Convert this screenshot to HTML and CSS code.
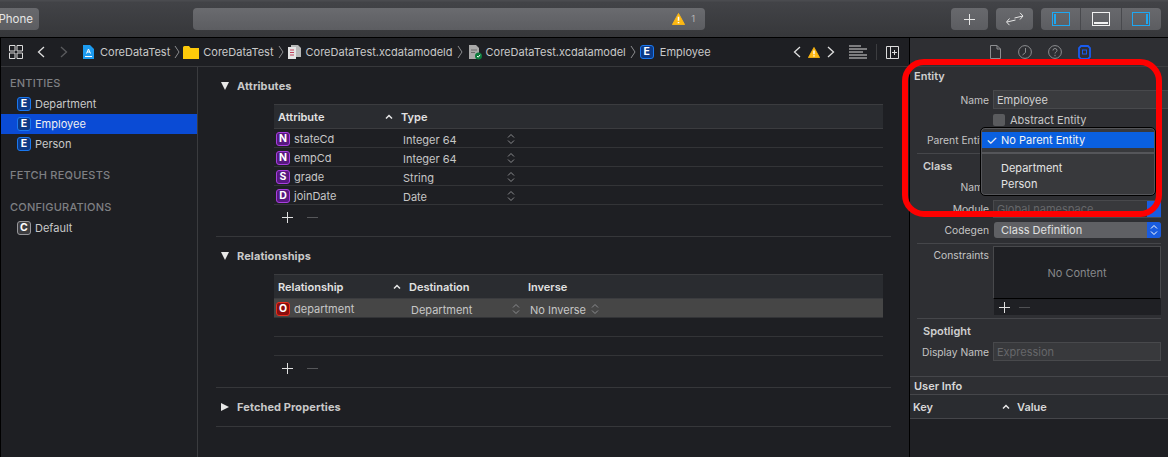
FILE: index.html
```html
<!DOCTYPE html>
<html lang="en">
<head>
<meta charset="utf-8">
<title>CoreDataTest</title>
<link rel="stylesheet" href="styles.css">
</head>
<body>
<svg class="defs" width="0" height="0" aria-hidden="true">
  <symbol id="stepper" viewBox="0 0 8 12"><path d="M1 4.500 4 1.500 7 4.500M1 7.500 4 10.500 7 7.500" fill="none" stroke="currentColor" stroke-width="1"/></symbol>
  <symbol id="caret" viewBox="0 0 8 6"><path d="M1 4.500 4 1.500 7 4.500" fill="none" stroke="currentColor" stroke-width="1.500"/></symbol>
  <symbol id="plus" viewBox="0 0 13 13"><path d="M6.500 1v11M1 6.500h11" stroke="currentColor" stroke-width="1" fill="none"/></symbol>
  <symbol id="minus" viewBox="0 0 13 13"><path d="M1 6.500h11" stroke="currentColor" stroke-width="1" fill="none"/></symbol>
  <symbol id="chev" viewBox="0 0 6 14"><path d="M1 1 5 7 1 13" stroke="currentColor" stroke-width="1" fill="none"/></symbol>
  <symbol id="warn" viewBox="0 0 14 13"><path d="M7 .5 13.600 12.500H.4Z" fill="#fdb813" stroke="#fdb813" stroke-linejoin="round"/><path d="M7 4v4.500M7 9.800v1.400" stroke="#fff" stroke-width="1.700"/></symbol>
</svg>
<div class="app">
  <header class="toolbar">
    <div class="tb-btn scheme">Phone</div>
    <div class="activity"><svg class="warn-icon"><use href="#warn"/></svg><span class="activity-count">1</span></div>
    <div class="tb-right">
      <div class="tb-btn icon-btn"><svg width="13" height="13"><use href="#plus"/></svg></div>
      <div class="tb-btn icon-btn">
        <svg width="20" height="14" viewBox="0 0 20 14"><path d="M2 10 10.500 8M4.500 6.500 1.500 10l3 3.200M9.500 6 18 4M15 .8l3 3.200-3 3.500" fill="none" stroke="currentColor" stroke-width="1"/></svg>
      </div>
      <div class="segment">
        <div class="seg"><svg width="18" height="14" viewBox="0 0 18 14"><rect x=".5" y=".5" width="17" height="13" fill="none" stroke="#1ea7f2"/><rect x="2" y="2" width="2" height="10" fill="#1ea7f2"/></svg></div>
        <div class="seg"><svg width="18" height="14" viewBox="0 0 18 14"><rect x=".5" y=".5" width="17" height="13" fill="none" stroke="#f2f2f2"/><rect x="2" y="10" width="14" height="2" fill="#f2f2f2"/></svg></div>
        <div class="seg"><svg width="18" height="14" viewBox="0 0 18 14"><rect x=".5" y=".5" width="17" height="13" fill="none" stroke="#1ea7f2"/><rect x="14" y="2" width="2" height="10" fill="#1ea7f2"/></svg></div>
      </div>
    </div>
  </header>

  <div class="workspace">
    <div class="editor">
      <nav class="pathbar">
        <svg class="p-grid" width="14" height="14" viewBox="0 0 14 14"><path d="M.5.500h5.500v5.500H.5zM8 .5h5.500v5.500H8zM.5 8h5.500v5.500H.5zM8 8h5.500v5.500H8z" fill="none" stroke="#dcdcdc"/></svg>
        <svg class="p-back" width="8" height="12" viewBox="0 0 8 12"><path d="M7 1 1.500 6 7 11" fill="none" stroke="#e0e0e0" stroke-width="1.300"/></svg>
        <svg class="p-fwd" width="8" height="12" viewBox="0 0 8 12"><path d="M1 1 6.500 6 1 11" fill="none" stroke="#5a5b5e" stroke-width="1.300"/></svg>
        <svg class="p-file" width="11" height="14" viewBox="0 0 11 14"><path d="M0 0h7l4 4v10H0z" fill="#1c9bf0"/><path d="M3.500 8.500 5.500 4 7.500 8.500M4 7h3M2 11.500h7" stroke="#fff" fill="none"/></svg>
        <span class="crumb c1">CoreDataTest</span>
        <svg class="sep" width="6" height="14"><use href="#chev"/></svg>
        <svg class="p-folder" width="16" height="13" viewBox="0 0 16 13"><path d="M0 1.500Q0 0 1.500 0H6l1.500 2H16v11H0z" fill="#fdc90a"/></svg>
        <span class="crumb c2">CoreDataTest</span>
        <svg class="sep" width="6" height="14"><use href="#chev"/></svg>
        <svg class="p-doc" width="13" height="14" viewBox="0 0 13 14"><path d="M3 0h7l3 3v9H3z" fill="#b9b9b9"/><path d="M0 2h8v12H0z" fill="#e4e4e4"/><path d="M2 5h4M2 7.500h4M2 10h4" stroke="#c0405a"/></svg>
        <span class="crumb c3">CoreDataTest.xcdatamodeld</span>
        <svg class="sep" width="6" height="14"><use href="#chev"/></svg>
        <svg class="p-doc2" width="13" height="15" viewBox="0 0 13 15"><path d="M0 0h7l3 3v11H0z" fill="#a9a9a9"/><path d="M2 5h6M2 7.500h4" stroke="#6a6a6a"/><circle cx="9.500" cy="11" r="3.500" fill="#0c7a3c"/><path d="M8 11l1.200 1.200L11.200 9.800" stroke="#fff" fill="none"/></svg>
        <span class="crumb c4">CoreDataTest.xcdatamodel</span>
        <svg class="sep" width="6" height="14"><use href="#chev"/></svg>
        <span class="badge blue">E</span>
        <span class="crumb c5">Employee</span>
        <div class="path-right">
          <svg width="8" height="12" viewBox="0 0 8 12"><path d="M7 1 1.500 6 7 11" fill="none" stroke="#e0e0e0" stroke-width="1.300"/></svg>
          <svg class="warn-small"><use href="#warn"/></svg>
          <svg width="8" height="12" viewBox="0 0 8 12"><path d="M1 1 6.500 6 1 11" fill="none" stroke="#e0e0e0" stroke-width="1.300"/></svg>
          <svg class="p-lines" width="18" height="14" viewBox="0 0 18 14"><path d="M0 1h12M0 4h18M0 7h14M0 10h18M0 13h18" stroke="#dcdcdc"/></svg>
          <span class="p-divider"></span>
          <svg width="13" height="13" viewBox="0 0 13 13"><path d="M.5.500h12v12H.5zM4.500.5v12M6 6.500h5M8.500 4v5" fill="none" stroke="#dcdcdc"/></svg>
        </div>
      </nav>
      <div class="panes">
        <aside class="sidebar">
          <div class="side-head first">ENTITIES</div>
          <div class="side-row"><span class="badge blue">E</span>Department</div>
          <div class="side-row selected"><span class="badge blue">E</span>Employee</div>
          <div class="side-row"><span class="badge blue">E</span>Person</div>
          <div class="side-head fetch">FETCH REQUESTS</div>
          <div class="side-head conf">CONFIGURATIONS</div>
          <div class="side-row"><span class="badge grey">C</span>Default</div>
        </aside>
        <main class="content">
          <section class="section attrs">
            <h2 class="sec-title"><span class="tri down"></span>Attributes</h2>
            <div class="table">
              <div class="t-head">
                <span class="th col-attr">Attribute<svg class="caret"><use href="#caret"/></svg></span>
                <span class="th">Type</span>
              </div>
              <div class="t-row"><span class="cell col-attr"><span class="badge purple">N</span>stateCd</span><span class="cell-val col-type">Integer 64<svg class="stepper"><use href="#stepper"/></svg></span></div>
              <div class="t-row"><span class="cell col-attr"><span class="badge purple">N</span>empCd</span><span class="cell-val col-type">Integer 64<svg class="stepper"><use href="#stepper"/></svg></span></div>
              <div class="t-row"><span class="cell col-attr"><span class="badge purple">S</span>grade</span><span class="cell-val col-type">String<svg class="stepper"><use href="#stepper"/></svg></span></div>
              <div class="t-row"><span class="cell col-attr"><span class="badge purple">D</span>joinDate</span><span class="cell-val col-type">Date<svg class="stepper"><use href="#stepper"/></svg></span></div>
              <div class="t-foot"><svg class="f-plus" width="13" height="13"><use href="#plus"/></svg><svg class="f-minus" width="13" height="13"><use href="#minus"/></svg></div>
            </div>
          </section>
          <section class="section rels">
            <h2 class="sec-title"><span class="tri down"></span>Relationships</h2>
            <div class="table">
              <div class="t-head">
                <span class="th col-rel">Relationship<svg class="caret"><use href="#caret"/></svg></span>
                <span class="th col-dest">Destination</span>
                <span class="th">Inverse</span>
              </div>
              <div class="t-row selected-row"><span class="cell col-rel"><span class="badge red">O</span>department</span><span class="cell-val col-destv">Department<svg class="stepper"><use href="#stepper"/></svg></span><span class="cell-val col-inv">No Inverse<svg class="stepper near"><use href="#stepper"/></svg></span></div>
              <div class="t-row"></div>
              <div class="t-row"></div>
              <div class="t-foot"><svg class="f-plus" width="13" height="13"><use href="#plus"/></svg><svg class="f-minus" width="13" height="13"><use href="#minus"/></svg></div>
            </div>
          </section>
          <section class="section fetched">
            <h2 class="sec-title"><span class="tri right"></span>Fetched Properties</h2>
          </section>
        </main>
      </div>
    </div>

    <aside class="inspector">
      <div class="insp-tabs">
        <svg class="tab-file" width="11" height="14" viewBox="0 0 11 14"><path d="M.5.500h6.500l3.500 3.500v9.500H.5zM7 .5v3.500h3.500" fill="none" stroke="#8d8e91"/></svg>
        <svg width="14" height="14" viewBox="0 0 14 14"><circle cx="7" cy="7" r="6.400" fill="none" stroke="#8d8e91"/><path d="M7.500 3v4.500L4.500 10" fill="none" stroke="#8d8e91"/></svg>
        <svg width="14" height="14" viewBox="0 0 14 14"><circle cx="7" cy="7" r="6.400" fill="none" stroke="#8d8e91"/><path d="M5 5.500Q5 3.500 7 3.500T9 5.500C9 7 7 7 7 8.500M7 9.800v1.400" fill="none" stroke="#8d8e91"/></svg>
        <svg width="13" height="15" viewBox="0 0 13 15"><path d="M3 1h7l2 2v9l-2 2H3l-2-2V3z" fill="none" stroke="#1a5cf0" stroke-width="1.800"/><rect x="4.500" y="5" width="4" height="4" fill="none" stroke="#1a5cf0"/></svg>
      </div>
      <div class="i-head entity">Entity</div>
      <div class="i-row name-row"><span class="i-label">Name</span><span class="i-field open">Employee</span></div>
      <div class="i-row abstract-row"><span class="i-label"></span><span class="check"></span><span class="check-label">Abstract Entity</span></div>
      <div class="i-row parent-row"><span class="i-label">Parent Entity</span></div>
      <div class="i-div"></div>
      <div class="i-head class-head">Class</div>
      <div class="i-row class-name"><span class="i-label">Name</span></div>
      <div class="i-row module-row"><span class="i-label">Module</span><span class="i-field dim combo">Global namespace<span class="combo-end"></span></span></div>
      <div class="i-row codegen-row"><span class="i-label">Codegen</span><span class="popup-btn">Class Definition<span class="popup-end"><svg class="stepper white"><use href="#stepper"/></svg></span></span></div>
      <div class="i-div codegen-div"></div>
      <div class="i-row constraints-row"><span class="i-label top">Constraints</span><div class="con-box">No Content</div></div>
      <div class="con-foot"><svg width="13" height="13"><use href="#plus"/></svg><svg class="dim-icon" width="13" height="13"><use href="#minus"/></svg></div>
      <div class="i-div spot-div"></div>
      <div class="i-head class-head">Spotlight</div>
      <div class="i-row display-row"><span class="i-label">Display Name</span><span class="i-field dim boxed">Expression</span></div>
      <div class="i-band userinfo">User Info</div>
      <div class="i-band keyhead"><span class="key">Key<svg class="caret"><use href="#caret"/></svg></span><span class="value">Value</span></div>
      <div class="i-rest"></div>

      <div class="menu">
        <div class="menu-item active"><span class="tick">✓</span>No Parent Entity</div>
        <div class="menu-sep"></div>
        <div class="menu-item">Department</div>
        <div class="menu-item">Person</div>
      </div>
      <div class="annotation"></div>
    </aside>
  </div>
</div>
</body>
</html>
```
FILE: styles.css
```css
* { box-sizing: border-box; }
html, body { margin: 0; padding: 0; }
body {
  width: 1168px;
  height: 457px;
  overflow: hidden;
  background: #1e1f23;
  color: #cfcfcf;
  font-family: Inter, "Liberation Sans", sans-serif;
  font-size: 11px;
  line-height: 14px;
}
.defs { position: absolute; }
svg { display: block; flex: none; }
.app { display: flex; flex-direction: column; height: 457px; }

/* toolbar */
.toolbar {
  height: 38px;
  flex: none;
  display: flex;
  align-items: flex-start;
  padding-top: 8px;
  background: linear-gradient(#4a4b4f 0, #4a4b4f 1px, #424347 2px, #36373a 100%);
  border-bottom: 1px solid #000;
}
.tb-btn {
  height: 22px;
  background: linear-gradient(#68696d, #5c5d61);
  border-radius: 4px;
  color: #e6e6e6;
  display: flex;
  align-items: center;
  justify-content: center;
}
.scheme { width: 39px; font-size: 11.500px; border-radius: 0 4px 4px 0; justify-content: flex-end; padding-right: 6px; }
.activity {
  width: 512px;
  height: 22px;
  margin-left: 154px;
  background: linear-gradient(#6a6b6f, #5c5d61);
  border-radius: 4px;
  display: flex;
  align-items: center;
  justify-content: flex-end;
  padding-right: 10px;
}
.warn-icon { width: 13px; height: 12px; }
.activity-count { margin-left: 6px; font-size: 9.500px; color: #b4b4b4; }
.tb-right { margin-left: 246px; display: flex; gap: 8px; }
.icon-btn { width: 37px; }
.segment {
  width: 120px;
  height: 22px;
  display: flex;
  border-radius: 4px;
  background: linear-gradient(#68696d, #5c5d61);
  overflow: hidden;
}
.seg { flex: 1; display: flex; align-items: center; justify-content: center; border-left: 1px solid #48494d; }
.seg:first-child { border-left: 0; }

/* layout */
.workspace { flex: 1; min-height: 0; display: flex; }
.editor { flex: none; display: flex; flex-direction: column; border-left: 1px solid #000; border-right: 1px solid #000; width: 910px; }
.pathbar {
  height: 29px;
  flex: none;
  display: flex;
  align-items: center;
  color: #c9c9c9;
  background: #1e1f23;
  border-bottom: 1px solid #37383b;
}
.p-grid { margin-left: 8px; }
.p-back { margin-left: 14px; }
.p-fwd { margin-left: 15px; }
.p-file { margin-left: 15px; }
.crumb { white-space: nowrap; }
.c1 { margin-left: 6px; }
.c2 { margin-left: 4px; }
.c3 { margin-left: 5px; }
.c4 { margin-left: 4px; }
.c5 { margin-left: 6px; }
.sep { color: #8b8c8f; margin-left: 4px; }
.p-folder { margin-left: 3px; }
.p-doc { margin-left: 4px; }
.p-doc2 { margin-left: 6px; }
.sep + .badge { margin-left: 4px; margin-right: 0; }
.path-right { margin-left: auto; margin-right: 10px; display: flex; align-items: center; gap: 7px; }
.warn-small { width: 12px; height: 11px; }
.p-lines { margin-left: 7px; }
.p-divider { width: 1px; height: 16px; background: #3c3d40; margin: 0 2px; }
.panes { flex: 1; min-height: 0; display: flex; }

/* badges */
.badge {
  width: 14px;
  height: 14px;
  flex: none;
  border-radius: 3px;
  border: 1px solid;
  color: #fff;
  font-weight: 700;
  font-size: 10.500px;
  line-height: 12px;
  text-align: center;
  margin-right: 4px;
}
.blue { background: #0c3a86; border-color: #1a78f0; }
.purple { background: #57187f; border-color: #a83ee0; }
.red { background: #8c0d0d; border-color: #e8301e; }
.grey { background: #3d3d40; border-color: #97979b; }

/* sidebar */
.sidebar { width: 197px; flex: none; border-right: 1px solid #3a3b3e; background: #1e1f23; }
.side-head { font-weight: 500; color: #7f8083; padding-left: 9px; height: 14px; letter-spacing: .2px; }
.side-head.first { margin-top: 9px; margin-bottom: 4px; }
.side-head.fetch { margin-top: 14px; }
.side-head.conf { margin-top: 18px; margin-bottom: 4px; }
.side-row { height: 20px; display: flex; align-items: center; padding-left: 16px; color: #c9c9c9; }
.side-row.selected { background: #0a4bd5; color: #f0f0f0; }

/* content */
.content { flex: 1; min-width: 0; padding: 0 18px; background: #1e1f23; }
.section { border-bottom: 1px solid #36373a; }
.attrs { height: 170px; padding-top: 12px; }
.rels { height: 151px; padding-top: 12px; }
.fetched { height: 39px; padding-top: 12px; }
.sec-title { margin: 0; height: 14px; font-size: 11px; font-weight: 700; color: #c9c9c9; display: flex; align-items: center; padding-left: 21px; position: relative; letter-spacing: .1px; }
.tri { position: absolute; left: 5px; width: 0; height: 0; }
.tri.down { top: 3px; border-left: 4.500px solid transparent; border-right: 4.500px solid transparent; border-top: 8px solid #e8e8e8; }
.tri.right { top: 3px; border-top: 4.500px solid transparent; border-bottom: 4.500px solid transparent; border-left: 8px solid #e8e8e8; left: 5px; }
.table { margin: 11px 8px 0 58px; }
.t-head {
  height: 25px;
  display: flex;
  align-items: center;
  background: #2a2c30;
  border-top: 1px solid #3b3c3f;
  border-bottom: 1px solid #3b3c3f;
  padding-left: 4px;
  color: #e2e2e2;
  font-weight: 600;
}
.th { display: flex; align-items: center; white-space: nowrap; }
.caret { width: 8px; height: 6px; color: #e8e8e8; margin-left: auto; margin-right: 8px; }
.col-attr { width: 123px; }
.col-rel { width: 131px; }
.col-dest { width: 119px; }
.t-row { height: 19px; display: flex; align-items: center; border-bottom: 1px solid #333437; padding: 1px 0 0 2px; color: #c6c6c6; }
.cell { display: flex; align-items: center; white-space: nowrap; }
.t-row .col-attr { width: 127px; }
.t-row .col-rel { width: 133px; }
.cell-val { display: flex; align-items: center; white-space: nowrap; padding-top: 2px; }
.col-type { width: 116px; }
.col-destv { width: 119px; position: relative; left: 2px; }
.col-inv { position: relative; left: 2px; }
.stepper { width: 8px; height: 12px; color: #8a8b8e; margin-left: auto; margin-top: -2px; }
.stepper.near { margin-left: 5px; }
.col-type .stepper { margin-right: 4px; }
.col-destv .stepper { margin-right: 10px; }
.selected-row { background: #464646; }
.t-foot { display: flex; align-items: center; height: 24px; padding-left: 7px; color: #e0e0e0; gap: 12px; }
.f-minus { color: #56575a; }

/* inspector */
.inspector { flex: 1; min-width: 0; position: relative; display: flex; flex-direction: column; background: #2e2f33; }
.insp-tabs { height: 29px; flex: none; display: flex; align-items: center; padding-left: 80px; gap: 16px; border-bottom: 1px solid #3d3e41; }
.tab-file { margin-right: 1px; }
.i-head { height: 14px; font-weight: 600; color: #d0d0d0; flex: none; }
.entity { margin-top: 2px; padding-left: 4px; }
.class-head { margin-top: 5px; padding-left: 13px; }
.i-row { display: flex; align-items: center; flex: none; }
.i-label { width: 79px; text-align: right; margin-right: 4px; color: #c4c4c4; white-space: nowrap; flex: none; font-size: 10.300px; }
.i-field { flex: 1; align-self: stretch; display: flex; align-items: center; padding-left: 3px; background: #3a3b3e; color: #d0d0d0; border: 1px solid #48494c; border-right: 0; }
.name-row { height: 19px; margin-top: 7px; }
.abstract-row { height: 14px; margin-top: 4px; }
.check { width: 12px; height: 12px; border-radius: 2px; background: #5a5b5e; margin-right: 5px; }
.check-label { color: #c8c8c8; }
.parent-row { height: 16px; margin-top: 5px; }
.parent-row .i-label { text-align: left; padding-left: 17px; }
.i-div { height: 1px; flex: none; background: #45464a; margin: 5px 7px 0; }
.class-name { height: 18px; margin-top: 5px; }
.module-row { height: 18px; margin-top: 4px; }
.dim { color: #66676a; background: #38393c; }
.combo { margin-right: 7px; position: relative; padding-right: 14px; }
.combo-end { position: absolute; right: 0; top: 0; bottom: 0; width: 14px; background: #1a5ce0; }
.codegen-row { height: 16px; margin-top: 4px; }
.popup-btn { flex: 1; margin: 0 7px 0 1px; height: 16px; border-radius: 3px; background: #5f6064; color: #e0e0e0; display: flex; align-items: center; padding-left: 7px; overflow: hidden; font-size: 11px; }
.popup-end { margin-left: auto; width: 14px; height: 16px; background: #1a5ce0; display: flex; align-items: center; justify-content: center; }
.stepper.white { color: #fff; margin: 0; }
.codegen-div { margin-top: 5px; }
.constraints-row { align-items: flex-start; height: 53px; margin-top: 2px; }
.i-label.top { margin-top: 2px; }
.con-box { flex: 1; height: 53px; margin-right: 7px; background: #1f2024; border: 1px solid #48494c; border-bottom-color: #000; display: flex; align-items: center; justify-content: center; color: #87888b; }
.con-foot { height: 16px; flex: none; margin: 0 7px 0 84px; background: #1f2024; display: flex; align-items: center; padding-left: 4px; gap: 7px; color: #e0e0e0; }
.dim-icon { color: #4f5053; }
.spot-div { margin-top: 3px; }
.display-row { height: 19px; margin-top: 4px; }
.boxed { margin-right: 7px; border-right: 1px solid #48494c; }
.i-band { flex: none; padding-left: 4px; font-weight: 600; color: #d8d8d8; display: flex; align-items: center; }
.userinfo { height: 19px; margin-top: 15px; border-top: 1px solid #45464a; border-bottom: 1px solid #45464a; }
.keyhead { height: 24px; background: #2a2c30; border-bottom: 1px solid #45464a; padding-left: 3px; }
.key { width: 97px; display: flex; align-items: center; }
.key .caret { margin-right: 0; }
.value { margin-left: 7px; }
.i-rest { flex: 1; background: #1f2024; }

/* overlay menu + annotation */
.menu {
  position: absolute;
  left: 70px;
  top: 89px;
  width: 176px;
  height: 69px;
  padding-top: 4px;
  background: #38393c;
  border: 1px solid #000;
  border-radius: 5px;
  box-shadow: 0 0 0 1px #55565a inset;
  color: #e4e4e4;
}
.menu-item { height: 16px; display: flex; align-items: center; padding-left: 20px; position: relative; }
.menu-item.active { background: #0a60e0; color: #f5f5f5; margin: 0 1px; padding-left: 19px; }
.tick { position: absolute; left: 4px; font-size: 13px; }
.menu-sep { height: 2px; background: #55565a; margin: 4px 1px 6px; }
.annotation {
  position: absolute;
  left: -8px;
  top: 21px;
  width: 260px;
  height: 158px;
  border: 6px solid #fe0000;
  border-radius: 22px;
  pointer-events: none;
}
```
